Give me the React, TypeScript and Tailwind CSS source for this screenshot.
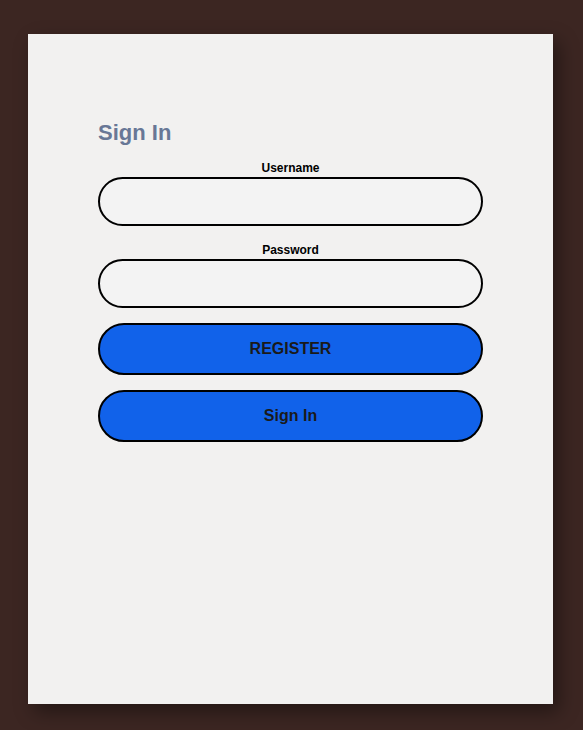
export default function App() {
  return (
    <div className="min-h-[730px] w-full bg-[#3c2622] pl-[28px] pt-[34px] font-['Liberation_Sans',Arial,sans-serif]">
      <div className="flex h-[670px] w-[525px] flex-col bg-[#f2f1f0] px-[70px] pt-[86px] shadow-[6px_8px_18px_rgba(0,0,0,0.4)]">
        <h1 className="text-[22px] font-bold leading-[25px] text-[#687796]">Sign In</h1>

        <label className="mt-[16px] text-center text-[12px] font-bold leading-[14px] text-black">Username</label>
        <input
          type="text"
          className="mt-[2px] h-[49px] w-full rounded-full border-2 border-black bg-[#f3f3f3] px-5 outline-none"
        />

        <label className="mt-[17px] text-center text-[12px] font-bold leading-[14px] text-black">Password</label>
        <input
          type="password"
          className="mt-[2px] h-[49px] w-full rounded-full border-2 border-black bg-[#f3f3f3] px-5 outline-none"
        />

        <button className="mt-[15px] h-[52px] w-full rounded-full border-2 border-black bg-[#1162ea] text-[16px] font-bold text-[#1a1a1a]">
          REGISTER
        </button>
        <button className="mt-[15px] h-[52px] w-full rounded-full border-2 border-black bg-[#1162ea] text-[16px] font-bold text-[#1a1a1a]">
          Sign In
        </button>
      </div>
    </div>
  );
}
